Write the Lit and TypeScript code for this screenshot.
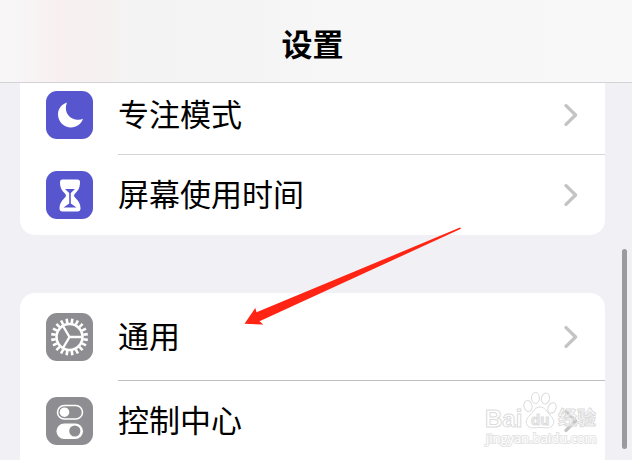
import { LitElement, html, css, svg } from "lit";
import { customElement, property } from "lit/decorators.js";

type IconName = "moon" | "hourglass" | "gear" | "switches";

interface Item {
  label: string;
  icon: IconName;
  tall?: boolean;
}

const groups: Item[][] = [
  [
    { label: "专注模式", icon: "moon" },
    { label: "屏幕使用时间", icon: "hourglass" },
  ],
  [
    { label: "通用", icon: "gear", tall: true },
    { label: "控制中心", icon: "switches" },
  ],
];

const teeth = Array.from({ length: 20 }, (_, i) => i * 18 + 9);

const glyphs = {
  moon: svg`<path fill="#fff" d="M21 11C16 12.500 12 17 12 23C12 30 18 36 25 36C30.500 36 35.500 32.500 37 27.300C35 28.200 33 28.500 30.800 28.200C24.500 27.500 20.300 23 19.900 17.500C19.800 15 20.200 13 21 11Z"/>`,
  hourglass: svg`
    <path fill="#fff" d="M16 8H31.500Q34 8 34 10.500C34 16 32.500 18.500 29.500 21.500Q28 23 28 24Q28 25 29.500 26.500C33 30 34.500 32.500 34.500 37Q34.500 40 31.500 40H16.500Q13.500 40 13.500 37C13.500 32.500 15 30 18.500 26.500Q20 25 20 24Q20 23 18.500 21.500C15.500 18.500 14 16 14 10.500Q14 8 16 8Z"/>
    <path fill="#5856ce" d="M19 17.500H29L24.800 21.500V32L30.500 36H17.500L23.200 32V21.500Z"/>`,
  gear: svg`
    <g stroke="#fff" fill="none">
      ${teeth.map(
        (a) => svg`<path stroke-width="2.600" d="M23.500 9.500V5" transform="rotate(${a} 23.500 23.500)"/>`
      )}
      <circle cx="23.500" cy="23.500" r="13" stroke-width="2.600"/>
      <path stroke-width="2.400" stroke-linejoin="round" d="M36 23.500H23.500L17 12.500M23.500 23.500L17 34.500"/>
    </g>`,
  switches: svg`
    <rect x="11.500" y="8" width="25" height="13.500" rx="6.750" fill="none" stroke="#fff" stroke-width="1.600"/>
    <circle cx="18.500" cy="14.700" r="4.800" fill="#fff"/>
    <rect x="10.500" y="26" width="26.500" height="15.500" rx="7.750" fill="#fff"/>
    <circle cx="28.800" cy="33.500" r="5.600" fill="#8e8e92"/>`,
};

@customElement("settings-row")
class SettingsRow extends LitElement {
  @property({ attribute: false }) item!: Item;

  static styles = css`
    :host {
      display: block;
    }
    .row {
      display: flex;
      align-items: stretch;
      width: 100%;
      height: 80px;
      padding: 0 0 0 26px;
      border: 0;
      background: none;
      color: #000;
      font: inherit;
      text-align: left;
      cursor: pointer;
    }
    .tall {
      height: 88px;
    }
    .tile {
      align-self: center;
      flex: none;
      width: 47px;
      height: 48px;
      margin-right: 25px;
      border-radius: 11px;
      background: #8e8e92;
    }
    .moon,
    .hourglass {
      background: #5856ce;
    }
    .body {
      flex: 1;
      display: flex;
      align-items: center;
      justify-content: space-between;
      padding-right: 26px;
      border-bottom: 1px solid var(--divider, #d4d4d6);
    }
    .label {
      padding-bottom: 4px;
    }
    .chevron {
      flex: none;
      width: 16px;
      height: 24px;
    }
  `;

  render() {
    const { label, icon, tall } = this.item;
    return html`<button type="button" class="row ${tall ? "tall" : ""}">
      <svg class="tile ${icon}" viewBox="0 0 47 47" aria-hidden="true">${glyphs[icon]}</svg>
      <span class="body">
        <span class="label">${label}</span>
        <svg class="chevron" viewBox="0 0 16 24" aria-hidden="true">
          <path d="M3 2.600L12.600 12L3 21.400" fill="none" stroke="#c4c4c6" stroke-width="3.400" stroke-linecap="round" stroke-linejoin="round"/>
        </svg>
      </span>
    </button>`;
  }
}

@customElement("app-root")
class AppRoot extends LitElement {
  static styles = css`
    :host {
      display: block;
      position: relative;
      height: 100vh;
      overflow: hidden;
      background: #f1f0f5;
      color: #000;
      font: 31px/40px "Noto Sans CJK SC", sans-serif;
    }
    .header {
      position: relative;
      z-index: 1;
      padding: 23px 27px 19px 20px;
      border-bottom: 1px solid #d3d3d7;
      background: linear-gradient(90deg, #f8f7f8 0, #f8f4f5 28px, #f8f0f0 60px, #f6f1f1 94px, #f4f3f3 136px, #f4f4f4 250px, #f7f7f7 330px, #f8f8f8 100%);
      text-align: center;
    }
    .title {
      margin: 0;
      font-size: 31px;
      line-height: 40px;
      font-weight: 600;
    }
    .list {
      display: flex;
      flex-direction: column;
      gap: 58px;
      margin-top: -8px;
      padding: 0 27px 0 20px;
    }
    .group {
      margin: 0;
      padding: 0;
      list-style: none;
      background: #fff;
      overflow: hidden;
    }
    .group:first-child {
      border-radius: 0 0 15px 15px;
    }
    .group:last-child {
      --divider: #bfbfc1;
      border-radius: 15px 15px 0 0;
    }
    .item:last-child {
      --divider: transparent;
    }
    .thumb {
      position: absolute;
      right: 5px;
      top: 249px;
      width: 5px;
      height: 200px;
      border-radius: 3px;
      background: #9b9a9f;
    }
    .arrow {
      position: absolute;
      left: 244px;
      top: 226px;
      width: 220px;
      height: 100px;
      pointer-events: none;
    }
    .watermark {
      position: absolute;
      right: 32px;
      top: 388px;
      width: 118px;
      height: 62px;
      pointer-events: none;
    }
    .mark {
      fill: #fff;
      fill-opacity: 0.5;
      stroke: #dcdcdc;
      stroke-width: 1px;
    }
    .latin {
      font: bold 24px "Liberation Sans", sans-serif;
    }
    .du {
      font: bold 15px "Liberation Sans", sans-serif;
      fill: #e0e0e0;
    }
    .cjk {
      font: bold 19px "Noto Sans CJK SC", sans-serif;
    }
    .url {
      font: 13px "Open Sans", sans-serif;
      fill: #fff;
      stroke: #e4e4e4;
      stroke-width: 2px;
      paint-order: stroke;
    }
  `;

  render() {
    return html`
      <header class="header"><h1 class="title">设置</h1></header>
      <main class="list">
        ${groups.map(
          (g) => html`<ul class="group">
            ${g.map((i) => html`<li class="item"><settings-row .item=${i}></settings-row></li>`)}
          </ul>`
        )}
      </main>
      <div class="thumb"></div>
      <svg class="arrow" viewBox="244 226 220 100" aria-hidden="true">
        <path fill="#ff2414" d="M244.500 323.800L255.300 308L256.500 312.300L460 227.600L461 228.800L259.500 321.200L263.300 324.600Z"/>
      </svg>
      <svg class="watermark" viewBox="482 388 118 62">
        <g class="mark">
          <text class="latin" x="485" y="427">Bai</text>
          <ellipse cx="528" cy="406" rx="4" ry="5.500" transform="rotate(-12 528 406)"/>
          <ellipse cx="535.500" cy="398" rx="4" ry="5.500"/>
          <ellipse cx="545.500" cy="398.500" rx="4" ry="5.500" transform="rotate(12 545.500 398.500)"/>
          <ellipse cx="552" cy="408" rx="4" ry="5.500" transform="rotate(25 552 408)"/>
          <path d="M540 407C545 407 547 412 550 415C554 419 555 423 552 426C549 429 545 427.500 540 427.500C535 427.500 531 429 528 426C525 423 526 419 530 415C533 412 535 407 540 407Z"/>
          <text class="du" x="531" y="425">du</text>
          <text class="cjk" x="558" y="425">经验</text>
        </g>
        <text class="url" x="486" y="443">jingyan.baidu.com</text>
      </svg>
    `;
  }
}
